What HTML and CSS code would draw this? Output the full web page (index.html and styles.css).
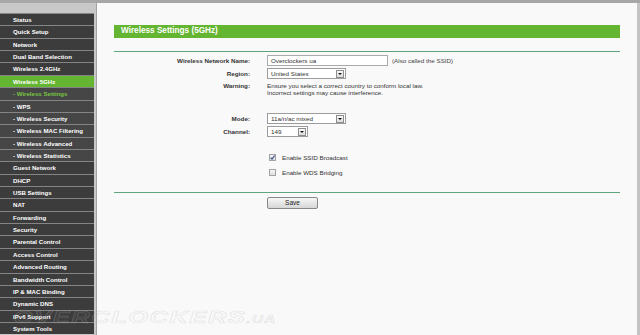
FILE: index.html
```html
<!DOCTYPE html>
<html lang="en">
<head>
  <meta charset="UTF-8" />
  <title>Wireless Settings (5GHz)</title>
  <link rel="stylesheet" href="styles.css">
</head>
<body>
  <div class="frame">
    <nav class="menu">
      <a class="item">Status</a>
      <a class="item">Quick Setup</a>
      <a class="item">Network</a>
      <a class="item">Dual Band Selection</a>
      <a class="item">Wireless 2.4GHz</a>
      <a class="item active">Wireless 5GHz</a>
      <a class="item sub current">- Wireless Settings</a>
      <a class="item sub">- WPS</a>
      <a class="item sub">- Wireless Security</a>
      <a class="item sub">- Wireless MAC Filtering</a>
      <a class="item sub">- Wireless Advanced</a>
      <a class="item sub">- Wireless Statistics</a>
      <a class="item">Guest Network</a>
      <a class="item">DHCP</a>
      <a class="item">USB Settings</a>
      <a class="item">NAT</a>
      <a class="item">Forwarding</a>
      <a class="item">Security</a>
      <a class="item">Parental Control</a>
      <a class="item">Access Control</a>
      <a class="item">Advanced Routing</a>
      <a class="item">Bandwidth Control</a>
      <a class="item">IP &amp; MAC Binding</a>
      <a class="item">Dynamic DNS</a>
      <a class="item">IPv6 Support</a>
      <a class="item">System Tools</a>
    </nav>

    <main class="content">
      <div class="title">Wireless Settings (5GHz)</div>
      <div class="rule"></div>

      <div class="row row-name">
        <div class="label">Wireless Network Name:</div>
        <div class="field">
          <div class="textbox">Overclockers ua</div>
          <span class="hint">(Also called the SSID)</span>
        </div>
      </div>

      <div class="row row-region">
        <div class="label">Region:</div>
        <div class="field">
          <div class="dropdown wide">United States<span class="arrow"></span></div>
        </div>
      </div>

      <div class="row row-warning">
        <div class="label">Warning:</div>
        <div class="note">
          Ensure you select a correct country to conform local law.<br>
          Incorrect settings may cause interference.
        </div>
      </div>

      <div class="row row-mode">
        <div class="label">Mode:</div>
        <div class="field">
          <div class="dropdown wide">11a/n/ac mixed<span class="arrow"></span></div>
        </div>
      </div>

      <div class="row row-channel">
        <div class="label">Channel:</div>
        <div class="field">
          <div class="dropdown narrow">149<span class="arrow"></span></div>
        </div>
      </div>

      <div class="row row-ssid">
        <div></div>
        <div class="field">
          <span class="check checked">
            <svg viewBox="0 0 7 7" width="7" height="7"><path d="M1.6 3.6 L3 5.1 L5.6 1.6" fill="none" stroke="#3b4f8c" stroke-width="1.1"/></svg>
          </span>
          <span class="check-text">Enable SSID Broadcast</span>
        </div>
      </div>

      <div class="row row-wds">
        <div></div>
        <div class="field">
          <span class="check"></span>
          <span class="check-text">Enable WDS Bridging</span>
        </div>
      </div>

      <div class="rule rule-bottom"></div>

      <div class="row row-save">
        <div></div>
        <div class="field">
          <button class="save">Save</button>
        </div>
      </div>
    </main>
  </div>

  <div class="watermark">OVERCLOCKERS<small>.UA</small></div>
</body>
</html>
```

FILE: styles.css
```css
:root {
  --green: #64b531;
  --rule: #5fa47c;
  --menu-bg: #3c3c3c;
  --menu-sub: #464646;
  --panel: #f9f9f9;
  --text: #333;
}

body {
  margin: 0;
  font-family: "Liberation Sans", Arial, sans-serif;
  background: var(--panel);
  color: var(--text);
}

.frame {
  display: flex;
  height: 335px;
  border-top: 3px solid #a7a7a7;
  box-sizing: border-box;
  overflow: hidden;
}

/* left menu */
.menu {
  width: 94px;
  flex-shrink: 0;
  padding-top: 10px;
  padding-right: 2px;
  background: #c8c8c8;
  border-right: 1px solid #a2a2a2;
}

.item {
  display: block;
  height: 11.36px;
  line-height: 11.6px;
  padding-left: 13px;
  border-top: 1px solid #858585;
  background: var(--menu-bg);
  color: #fff;
  font-size: 6.1px;
  font-weight: bold;
  white-space: nowrap;
  overflow: hidden;
}

.item.sub {
  background: var(--menu-sub);
}

.item.active {
  background: var(--green);
}

.item.current {
  color: #78c444;
}

/* main panel */
.content {
  flex: 1;
  padding: 22px 17px 0;
  background: var(--panel);
  border-right: 3px solid #c4c4c4;
}

.title {
  height: 12.6px;
  line-height: 12.8px;
  padding-left: 7px;
  background: var(--green);
  color: #fff;
  font-size: 8.2px;
  font-weight: bold;
}

.rule {
  height: 1px;
  margin-top: 13px;
  background: var(--rule);
}

.rule-bottom {
  margin-top: 14.5px;
}

.row {
  display: grid;
  grid-template-columns: 136px 1fr;
  column-gap: 17px;
  align-items: center;
  font-size: 6.25px;
}

.label {
  text-align: right;
  font-weight: bold;
  color: #333;
}

.field {
  display: flex;
  align-items: center;
  gap: 4px;
}

.row-name { margin-top: 3.4px; height: 11px; }
.row-region { margin-top: 2px; height: 11px; }
.row-warning { margin-top: 3.5px; align-items: start; line-height: 7px; }
.row-mode { margin-top: 16.5px; height: 11px; }
.row-channel { margin-top: 2px; height: 11px; }
.row-ssid { margin-top: 16.5px; height: 9px; }
.row-wds { margin-top: 6px; height: 9px; }
.row-save { margin-top: 4px; height: 12px; }

.textbox {
  width: 116px;
  height: 9px;
  line-height: 9.4px;
  padding-left: 3px;
  background: #fff;
  border: 1px solid #aaa;
  color: #333;
}

.hint {
  color: #444;
}

.dropdown {
  position: relative;
  height: 9px;
  line-height: 9.4px;
  padding-left: 3px;
  background: #fff;
  border: 1px solid #9c9c9c;
  color: #333;
  box-sizing: content-box;
}

.dropdown.wide { width: 74px; }
.dropdown.narrow { width: 36px; }

.arrow {
  position: absolute;
  top: 1px;
  right: 1px;
  width: 6px;
  height: 6px;
  border: 1px solid #8d8d8d;
  background: linear-gradient(#fafafa, #dcdcdc);
}

.arrow::after {
  content: "";
  position: absolute;
  left: 1px;
  top: 2px;
  border-left: 2px solid transparent;
  border-right: 2px solid transparent;
  border-top: 2px solid #111;
}

.note {
  color: #333;
}

.check {
  width: 5px;
  height: 5px;
  margin-left: 2px;
  border: 1px solid #a3a3a3;
  background: linear-gradient(#f6f6f6, #dedede);
  position: relative;
}

.check svg {
  position: absolute;
  left: -1px;
  top: -1px;
}

.check-text {
  margin-left: 2px;
  color: #333;
}

.save {
  width: 51px;
  height: 12px;
  padding: 0;
  border: 1px solid #888;
  border-radius: 2px;
  background: linear-gradient(#f7f7f7, #d6d6d6);
  font-family: "Liberation Sans", Arial, sans-serif;
  font-size: 6.5px;
  color: #222;
}

/* site watermark laid over the screenshot */
.watermark {
  position: absolute;
  left: 13px;
  top: 308px;
  font-size: 17px;
  font-weight: bold;
  font-style: italic;
  letter-spacing: 1px;
  color: rgba(255, 255, 255, 0.05);
  -webkit-text-stroke: 0.6px rgba(175, 175, 175, 0.3);
  transform: scaleX(1.5);
  transform-origin: left top;
  white-space: nowrap;
  pointer-events: none;
}

.watermark small {
  font-size: 10px;
}
```
